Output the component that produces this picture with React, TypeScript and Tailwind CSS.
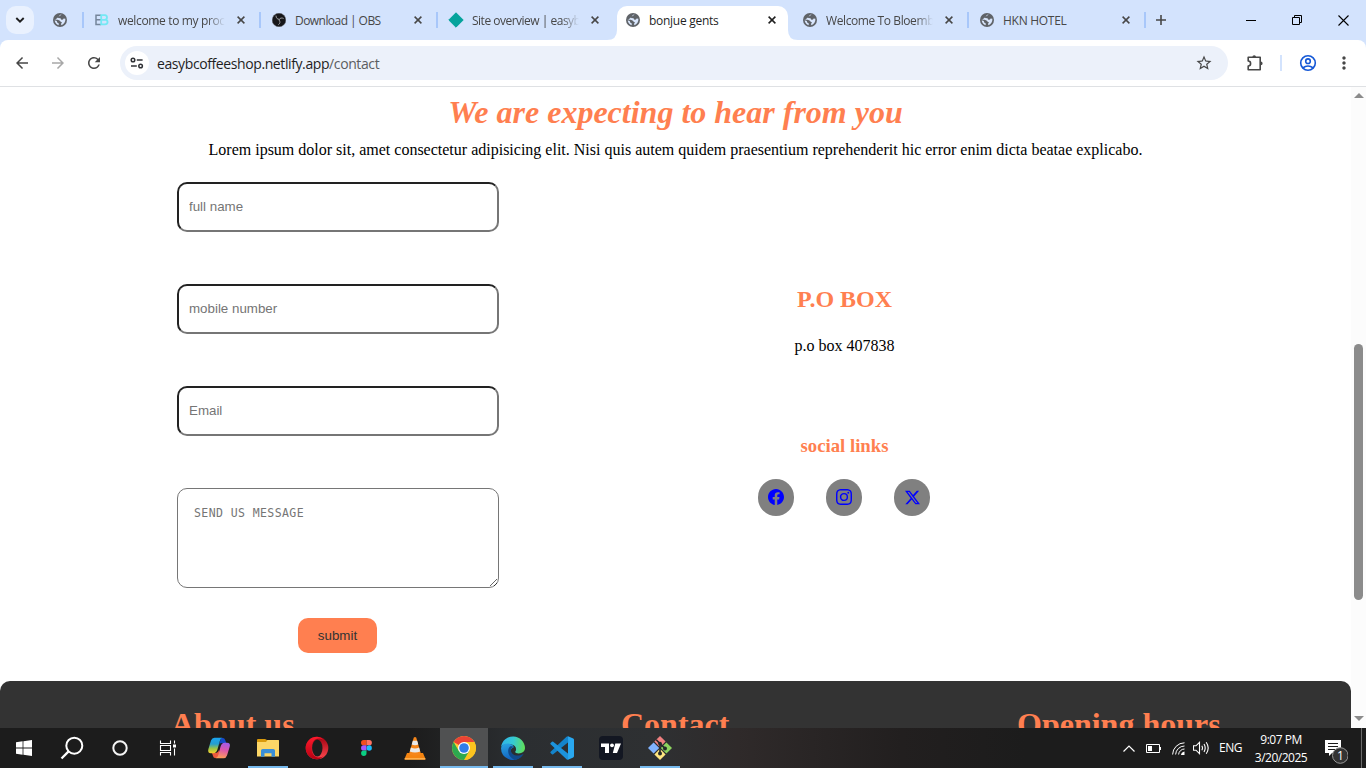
import type { ReactNode } from "react";
import { MdArrowBack, MdArrowForward, MdRefresh, MdStarBorder, MdMoreVert } from "react-icons/md";
import { BsFacebook, BsInstagram, BsTwitterX } from "react-icons/bs";

const Globe = () => (
  <svg width="14" height="14" viewBox="0 0 14 14" className="shrink-0">
    <circle cx="7" cy="7" r="7" fill="#5f6368" />
    <path d="M8.6 1.6 C7 1.4 6 2.6 6.4 3.4 C5.2 3.4 4.8 4.2 5 5 L7.6 5.2 C7.8 6.6 8.8 6.8 10 6.6 L10.6 5.4 L12.4 5.8 C12.6 9 11 11.4 8.4 12.2 L8 10.8 L9 9.4 L7.4 8.6 C6.8 7.2 5.2 6.6 1.6 6.8 C1.8 9.6 3.4 11.6 5.6 12.2 L5.8 10.6 L4.2 9.4 L3.8 8 L1.5 7.2 Z" fill="#d9e6fc" fillRule="evenodd" />
  </svg>
);

const ObsIcon = () => (
  <svg width="14" height="14" viewBox="0 0 14 14" className="shrink-0">
    <circle cx="7" cy="7" r="6.8" fill="#17171a" stroke="#55565c" strokeWidth=".5" />
    <g fill="none" stroke="#b9babd" strokeWidth=".8" strokeLinecap="round">
      <path d="M4 3 C4 5 5.2 6.2 7 6.3" />
      <path d="M11.3 5.3 C9.5 4.5 8 5 7.2 6.5" />
      <path d="M6.6 11.6 C8.3 10.4 8.4 8.6 7.2 7.2" />
    </g>
  </svg>
);

const EbIcon = () => (
  <svg width="14" height="14" viewBox="0 0 14 14" className="shrink-0">
    <path d="M6 2.2H1V11.4H6M1 6.8H6" fill="none" stroke="#76869b" strokeWidth="1.5" />
    <path d="M6.2 2.2H10Q12 2.4 12 4.4Q12 6.4 10 6.7Q12.6 7 12.6 9.2Q12.4 11.3 10 11.4H6.2ZM6.2 6.8H10" fill="none" stroke="#74e8f4" strokeWidth="1.8" />
  </svg>
);

const DiamondIcon = () => (
  <svg width="16" height="16" viewBox="0 0 16 16" className="-mx-px shrink-0">
    <path d="M8 .8L15.2 8L8 15.2L.8 8Z" fill="#05a39c" stroke="#05a39c" strokeLinejoin="round" />
  </svg>
);

const CloseIcon = ({ color = "#474747" }: { color?: string }) => (
  <svg width="8" height="8" viewBox="0 0 8 8" className="shrink-0">
    <path d="M.6 .6L7.4 7.4M7.4 .6L.6 7.4" stroke={color} strokeWidth="1.5" />
  </svg>
);

interface TabProps {
  title: string;
  icon: ReactNode;
  tracking?: string;
  active?: boolean;
  fade?: boolean;
  divider?: boolean;
}

const Tab = ({ title, icon, tracking = "tracking-[-0.28px]", active, fade, divider }: TabProps) => (
  <div className="relative flex h-10 w-[177px] shrink-0 items-center pl-[11px]">
    {active && (
      <>
        <div className="absolute top-1.5 left-0.5 h-[34px] w-[171px] rounded-t-[10px] bg-white" />
        <svg className="absolute bottom-0 left-[-8px]" width="10" height="10">
          <path d="M0 10Q10 10 10 0V10Z" fill="#fff" />
        </svg>
        <svg className="absolute bottom-0 left-[173px]" width="10" height="10">
          <path d="M10 10Q0 10 0 0V10Z" fill="#fff" />
        </svg>
      </>
    )}
    <div className="relative flex items-center">{icon}</div>
    <div
      className={
        "relative ml-[9px] w-[107px] overflow-hidden pt-0.5 text-[12px] leading-4 whitespace-nowrap " +
        tracking +
        (active ? " text-[#1f1f1f] " : " text-[#474747] ") +
        (fade ? "[mask-image:linear-gradient(to_right,black_84%,transparent)]" : "")
      }
    >
      {title}
    </div>
    <div className="relative ml-3">
      <CloseIcon color={active ? "#1f1f1f" : "#474747"} />
    </div>
    {divider && <div className="ml-auto h-4 w-0.5 bg-[#a8c7fa]" />}
  </div>
);

const TabStrip = () => (
  <div className="flex h-10 items-center bg-[#d3e3fd]">
    <button className="ml-1.5 flex size-7 shrink-0 items-center justify-center rounded-[10px] bg-[#e9f1fe]">
      <svg width="10" height="6" viewBox="0 0 10 6">
        <path d="M1.3 1L5 4.6L8.7 1" fill="none" stroke="#1f1f1f" strokeWidth="1.9" />
      </svg>
    </button>
    <div className="ml-[19px] flex w-[31px] shrink-0 items-center justify-between">
      <Globe />
      <div className="h-4 w-0.5 bg-[#a8c7fa]" />
    </div>
    <Tab title="welcome to my proc" icon={<EbIcon />} tracking="tracking-[-0.35px]" fade divider />
    <Tab title="Download | OBS" icon={<ObsIcon />} tracking="tracking-[-0.55px]" divider />
    <Tab title="Site overview | easyb" icon={<DiamondIcon />} tracking="tracking-[-0.5px]" fade />
    <Tab title="bonjue gents" icon={<Globe />} active />
    <Tab title="Welcome To Bloemb" icon={<Globe />} tracking="tracking-[-0.4px]" fade divider />
    <Tab title="HKN HOTEL" icon={<Globe />} divider />
    <svg width="10" height="10" viewBox="0 0 10 10" className="ml-[10px] shrink-0">
      <path d="M5 0V10M0 5H10" stroke="#474747" strokeWidth="1.6" />
    </svg>
    <div className="ml-auto flex items-center text-black">
      <div className="flex w-[46px] justify-center">
        <svg width="10" height="10"><path d="M0 5.5H10" stroke="currentColor" /></svg>
      </div>
      <div className="flex w-[46px] justify-center">
        <svg width="10" height="10" fill="none" stroke="currentColor">
          <path d="M.5 2.5H7.5V9.5H.5ZM2.5 2.5V.5H9.5V7.5H7.5" />
        </svg>
      </div>
      <div className="flex w-[46px] justify-center">
        <svg width="11" height="11"><path d="M.5 .5L10.5 10.5M10.5 .5L.5 10.5" stroke="currentColor" strokeWidth="1.1" /></svg>
      </div>
    </div>
  </div>
);

const Toolbar = () => (
  <div className="bg-[#d3e3fd]">
    <div className="flex h-[47px] items-center rounded-t-lg border-b border-[#dfe1e4] bg-white text-[#474747]">
      <MdArrowBack size={18} className="ml-[13px]" />
      <MdArrowForward size={18} className="ml-[18px] text-[#a8a8a8]" />
      <MdRefresh size={18} className="ml-[18px]" />
      <div className="ml-[17px] flex h-[34px] w-[1108px] items-center rounded-full bg-[#ecf1fa] pr-[15px] pl-[5px]">
        <div className="flex size-6 items-center justify-center rounded-full bg-white">
          <svg width="14" height="12" viewBox="0 0 14 12" fill="none" stroke="#303236" strokeWidth="1.5">
            <circle cx="3" cy="3" r="1.8" />
            <path d="M6.8 3H12.6" />
            <circle cx="10.6" cy="9" r="1.8" />
            <path d="M1 9H6.8" />
          </svg>
        </div>
        <div className="ml-2 pt-px text-[14px] leading-5 tracking-[-0.4px] whitespace-nowrap text-[#1f1f1f]">
          easybcoffeeshop.netlify.app<span className="text-[#5b5d61]">/contact</span>
        </div>
        <MdStarBorder size={18} className="ml-auto" />
      </div>
      <svg width="18" height="18" viewBox="0 0 18 18" className="ml-[18px]" fill="none">
        <path d="M2.2 3.3H14.2V15.7H2.2V12Q4.6 12 4.6 9.5Q4.6 7 2.2 7Z" stroke="currentColor" strokeWidth="1.6" strokeLinejoin="round" />
        <path d="M6.4 3A1.8 1.8 0 0 1 10 3ZM14.8 7.6A1.8 1.8 0 0 1 14.8 11.2Z" fill="currentColor" />
      </svg>
      <div className="ml-4 h-4 w-0.5 bg-[#d3e3fd]" />
      <svg width="18" height="18" viewBox="0 0 18 18" className="ml-[17px]" fill="none" stroke="#1558d6" strokeWidth="1.6">
        <circle cx="9" cy="9" r="7.3" />
        <circle cx="9" cy="7.2" r="2.3" />
        <path d="M3.7 14Q9 9.9 14.3 14" />
      </svg>
      <MdMoreVert size={20} className="ml-[17px]" />
    </div>
  </div>
);

const field =
  "block h-[50px] w-[322px] rounded-[10px] border-2 border-t-[#222] border-r-[#767676] border-b-[#767676] border-l-[#222] bg-white px-2.5 pb-0.5 font-['Liberation_Sans',sans-serif] text-[13.333px] placeholder:text-[#757575]";

const Social = ({ children }: { children: ReactNode }) => (
  <a className="flex h-[37px] w-9 items-center justify-center rounded-full bg-[#808080] pb-px text-[#00f]">{children}</a>
);

const Page = () => (
  <main className="flex h-[641px] w-[1351px] flex-col overflow-hidden bg-white font-['Liberation_Serif',serif] text-black">
    <h1 className="mt-[7px] text-center text-[32px] leading-[37px] font-bold text-[#ff7f50] italic">We are expecting to hear from you</h1>
    <p className="mt-[10px] text-center text-[16px] leading-[18px]">
      Lorem ipsum dolor sit, amet consectetur adipisicing elit. Nisi quis autem quidem praesentium reprehenderit hic error enim dicta beatae explicabo.
    </p>
    <div className="mt-[23px] flex h-[499px] shrink-0">
      <form className="ml-[177px] flex w-[322px] flex-col items-start">
        <input className={field} placeholder="full name" />
        <input className={field + " mt-[52px]"} placeholder="mobile number" />
        <input className={field + " mt-[52px]"} placeholder="Email" />
        <textarea
          className="mt-[52px] block h-[100px] w-[322px] resize rounded-[10px] border border-[#767676] bg-white px-4 pt-[17px] font-['DejaVu_Sans_Mono',monospace] text-[11.5px] leading-[15px] tracking-[0.41px] placeholder:text-[#757575]"
          placeholder="SEND US MESSAGE"
        />
        <button
          type="button"
          className="mt-[30px] ml-[121px] h-[35px] w-[79px] rounded-[10px] bg-[#ff7f50] font-['Liberation_Sans',sans-serif] text-[13.333px] text-[#333]"
        >
          submit
        </button>
      </form>
      <section className="ml-[169px] flex w-[352px] flex-col items-center pt-[103px]">
        <h2 className="pl-px text-[24px] leading-7 font-bold text-[#ff7f50]">P.O BOX</h2>
        <p className="mt-6 pl-px text-[16px] leading-[18px]">p.o box 407838</p>
        <h3 className="mt-20 pl-px text-[18.72px] leading-[21px] font-bold text-[#ff7f50]">social links</h3>
        <div className="mt-[23px] flex gap-8">
          <Social><BsFacebook size={16} /></Social>
          <Social><BsInstagram size={16} /></Social>
          <Social><BsTwitterX size={15} /></Social>
        </div>
      </section>
    </div>
    <footer className="flex h-[160px] shrink-0 rounded-[10px] bg-[#333] pt-[25px] text-[32px] leading-[37px] font-bold text-[#ff7f50]">
      <h2 className="ml-[171px] w-[450px]">About us</h2>
      <h2 className="w-[396px]">Contact</h2>
      <h2>Opening hours</h2>
    </footer>
  </main>
);

const Scrollbar = () => (
  <div className="flex w-[15px] flex-col items-center bg-[#fcfcfc]">
    <svg width="10" height="5" className="mt-[6px]"><path d="M5 0L10 5H0Z" fill="#8b8b8b" /></svg>
    <div className="mt-[246px] h-[256px] w-[9px] rounded-full bg-[#8b8b8b]" />
    <svg width="10" height="5" className="mt-auto mb-[7px]"><path d="M5 5L10 0H0Z" fill="#8b8b8b" /></svg>
  </div>
);

const WindowsIcon = () => (
  <svg width="16" height="16" viewBox="0 0 16 16" fill="#fff">
    <path d="M0 2.2L6.6 1.3V7.6H0ZM7.4 1.2L16 0V7.6H7.4ZM0 8.4H6.6V14.7L0 13.8ZM7.4 8.4H16V16L7.4 14.8Z" />
  </svg>
);

const SearchIcon = () => (
  <svg width="24" height="24" viewBox="0 0 24 24" fill="none" stroke="#fff" strokeWidth="2">
    <circle cx="14.3" cy="9.7" r="8" />
    <path d="M8.6 15.4L1.5 22.5" strokeWidth="2.3" />
  </svg>
);

const CortanaIcon = () => (
  <svg width="16" height="16"><circle cx="8" cy="8" r="6.7" fill="none" stroke="#f5f5f5" strokeWidth="2" /></svg>
);

const TaskViewIcon = () => (
  <svg width="18" height="16" viewBox="0 0 18 16" fill="none" stroke="#fff" strokeWidth="1.1">
    <path d="M1.5 .5V3.5H11.5V.5M1.5 15.5V12.5H11.5V15.5M1.5 5.5H11.5V10.5H1.5ZM15.5 .5V3.5M15.5 8.5V15.5" />
    <path d="M14 4.5H17V7.5H14Z" fill="#fff" stroke="none" />
  </svg>
);

const CopilotIcon = () => (
  <svg width="24" height="22" viewBox="0 0 24 22">
    <defs>
      <linearGradient id="cpA" x1="0" y1="0" x2="0" y2="1">
        <stop offset="0" stopColor="#1aa5f0" /><stop offset=".4" stopColor="#249ed0" /><stop offset=".7" stopColor="#9cc544" /><stop offset="1" stopColor="#f9d22e" />
      </linearGradient>
      <linearGradient id="cpB" x1=".6" y1="0" x2=".4" y2="1">
        <stop offset="0" stopColor="#a35be8" /><stop offset=".45" stopColor="#dc56ad" /><stop offset="1" stopColor="#ff9e58" />
      </linearGradient>
    </defs>
    <path d="M14 1H16Q17.5 1 18.2 3L19.3 6H15Q12.5 6 12 8Z" fill="#1449c8" />
    <path d="M8 21Q6.5 21 6 19L5 16H9Q11.2 16 12 13L14 18Q13 21 10 21Z" fill="#ed5a3c" />
    <path d="M7.5 .8H15.5Q13.6 1 12.9 3.8L10.6 12Q9.5 16.2 6.2 16.2H4Q.3 16.2 1.4 12L4 3.6Q5 .8 7.5 .8Z" fill="url(#cpA)" />
    <path d="M16.5 21.2H8.5Q10.6 21 11.3 18L13.5 9.8Q14.6 5.8 17.6 5.8H20Q23.8 5.8 22.7 9.8L20 18.4Q19 21.2 16.5 21.2Z" fill="url(#cpB)" />
  </svg>
);

const FolderIcon = () => (
  <svg width="22" height="18" viewBox="0 0 22 18">
    <path d="M0 1Q0 0 1 0H8L10 1H21Q22 1 22 2V17H0Z" fill="#d99a0c" />
    <path d="M0 3H9L10.5 1H21.3Q22 1 22 2V17.5H0Z" fill="#fcd667" />
    <path d="M4 17.8V11.5Q4 9.9 5.7 9.9H16.3Q18 9.9 18 11.5V17.8H14.5V14.2H7.5V17.8Z" fill="#3a8fd8" />
  </svg>
);

const OperaIcon = () => (
  <svg width="24" height="24" viewBox="0 0 24 24">
    <defs>
      <linearGradient id="opA" x1="0" y1="0" x2="0" y2="1"><stop stopColor="#ff1b2d" /><stop offset="1" stopColor="#b60012" /></linearGradient>
      <linearGradient id="opB" x1="0" y1="0" x2="0" y2="1"><stop stopColor="#a10010" /><stop offset="1" stopColor="#ff4a50" /></linearGradient>
    </defs>
    <circle cx="12" cy="12" r="11.3" fill="url(#opB)" />
    <path d="M12 .7A11.3 11.3 0 0 0 12 23.3Q15.5 23.2 18.8 20.2C10 24 6.7 18 6.7 12S10 0 18.8 3.8Q15.5 .8 12 .7Z" fill="url(#opA)" />
    <ellipse cx="12.3" cy="12" rx="5.2" ry="8.6" fill="#1d1d1d" />
  </svg>
);

const FigmaIcon = () => (
  <svg width="11" height="16" viewBox="0 0 11 16">
    <path d="M5.5 0V5.3H2.7A2.65 2.65 0 0 1 2.7 0Z" fill="#f24e1e" />
    <path d="M5.5 0H8.2A2.65 2.65 0 0 1 8.2 5.3H5.5Z" fill="#ff7262" />
    <path d="M5.5 5.3V10.6H2.7A2.65 2.65 0 0 1 2.7 5.3Z" fill="#a259ff" />
    <circle cx="8.2" cy="8" r="2.65" fill="#1abcfe" />
    <path d="M2.7 10.6H5.5V13.3A2.7 2.7 0 1 1 2.7 10.6Z" fill="#0acf83" />
  </svg>
);

const VlcIcon = () => (
  <svg width="22" height="24" viewBox="0 0 22 24">
    <path d="M3 17H19L21.5 23Q21.5 23.5 20.5 23.5H1.5Q.5 23.5 .5 23Z" fill="#f58410" />
    <path d="M.7 22H21.3V23.7H.7Z" fill="#ffae4a" />
    <path d="M9.8 1.5Q11 .6 12.2 1.5L17 18Q11 21.5 5 18Z" fill="#f6861a" />
    <path d="M8.8 4.8H13.2L14.3 8.6Q11 10 7.7 8.6Z" fill="#e9e9e9" />
    <path d="M6.9 11.6Q11 13.3 15.1 11.6L16.2 15.4Q11 17.6 5.8 15.4Z" fill="#e9e9e9" />
  </svg>
);

const ChromeIcon = () => (
  <svg width="24" height="24" viewBox="0 0 24 24">
    <circle cx="12" cy="12" r="12" fill="#fcc934" />
    <path d="M12 12L1.61 6A12 12 0 0 1 22.39 6H12Z" fill="#ea4335" />
    <path d="M12 6H22.39A12 12 0 0 1 12 24L17.2 15Z" fill="#fcc31e" />
    <path d="M1.61 6A12 12 0 0 0 12 24L17.2 15L12 12L6.8 15Z" fill="#2da94f" />
    <circle cx="12" cy="12" r="6" fill="#fff" />
    <circle cx="12" cy="12" r="4.8" fill="#2f7de9" />
  </svg>
);

const EdgeIcon = () => (
  <svg width="24" height="24" viewBox="0 0 24 24">
    <defs>
      <linearGradient id="edA" x1="0" y1=".3" x2="1" y2=".4"><stop stopColor="#2fb3ea" /><stop offset=".5" stopColor="#35c9d4" /><stop offset="1" stopColor="#5fe05a" /></linearGradient>
      <linearGradient id="edB" x1="0" y1="0" x2=".3" y2="1"><stop stopColor="#2aa6e4" /><stop offset="1" stopColor="#1263c0" /></linearGradient>
    </defs>
    <path d="M.1 11A12 12 0 0 1 24 12C24 15.5 21 17.4 17.8 17.4C15.2 17.4 13.8 16.4 14.3 15.6C16.2 13 14.7 8.8 9.8 8.2C5.3 7.7 1.2 9 .1 11Z" fill="url(#edA)" />
    <path d="M0 12C1 7.8 6 6.6 9.8 8.2C12 9 12.8 10.4 12.5 11.5C9 12.3 8.5 17 13 20.5C15 22 18 21.8 20.3 20.6A12 12 0 0 1 0 12Z" fill="url(#edB)" />
    <path d="M9 10.5C5.5 13.8 7 20.8 13.5 23.9C17 23.7 20.5 21.6 22.3 18.6C22.5 18.2 22.1 18 21.8 18.2C15.5 21.5 9.4 18 9.9 13.7C10.1 12.2 11 11.4 12.5 11.3C12 10.3 10.3 9.9 9 10.5Z" fill="#114a8b" />
  </svg>
);

const VsCodeIcon = () => (
  <svg width="24" height="24" viewBox="0 0 24 24">
    <path d="M18 .2L23.2 2.6Q24 3 24 4V20Q24 21 23.2 21.4L18 23.8Z" fill="#29a8f0" />
    <path d="M18 .2L18.2 6.3L3.2 18.3Q2.6 18.7 2 18.3L.6 17Q0 16.4 .6 15.7L16.5 .8Q17.2 .1 18 .2Z" fill="#1484cb" />
    <path d="M18 23.8L18.2 17.7L3.2 5.7Q2.6 5.3 2 5.7L.6 7Q0 7.6 .6 8.3L16.5 23.2Q17.2 23.9 18 23.8Z" fill="#1c93dc" />
  </svg>
);

const TradingViewIcon = () => (
  <svg width="24" height="24" viewBox="0 0 24 24">
    <rect width="24" height="24" rx="4" fill="#131722" />
    <path d="M2 7.5H10V17H6V11H2ZM16.3 7.5H22L18 17H13.8Z" fill="#fff" />
    <circle cx="13" cy="9.3" r="1.9" fill="#fff" />
  </svg>
);

const GitIcon = () => (
  <svg width="24" height="24" viewBox="0 0 24 24">
    <path d="M12 0L17.6 5.6L12 11.2L6.4 5.6Z" fill="#f08080" />
    <path d="M5.6 6.4L11.2 12L5.6 17.6L0 12Z" fill="#80b3ff" />
    <path d="M18.4 6.4L24 12L18.4 17.6L12.8 12Z" fill="#8dd35f" />
    <path d="M12 12.8L17.6 18.4L12 24L6.4 18.4Z" fill="#ffe680" />
    <path d="M8.2 3.8L12 7.6V18M12 7.6L17 12.4" stroke="#24282a" strokeWidth="1.6" fill="none" />
    <g fill="#24282a"><circle cx="12" cy="7.6" r="1.9" /><circle cx="17" cy="12.4" r="2" /><circle cx="12" cy="17.6" r="2" /></g>
  </svg>
);

interface AppItem { icon: ReactNode; open?: boolean; current?: boolean }

const apps: AppItem[] = [
  { icon: <CopilotIcon /> },
  { icon: <FolderIcon />, open: true },
  { icon: <OperaIcon /> },
  { icon: <FigmaIcon /> },
  { icon: <VlcIcon /> },
  { icon: <ChromeIcon />, current: true },
  { icon: <EdgeIcon />, open: true },
  { icon: <VsCodeIcon />, open: true },
  { icon: <TradingViewIcon /> },
  { icon: <GitIcon />, open: true },
];

const Taskbar = () => (
  <div className="flex h-10 items-center bg-[linear-gradient(to_right,#1c1c1c_30%,#2b2e31_38%,#2e3032_48%,#2f2a2a_54%,#221f1f_66%,#1c1c1c_75%)] text-white">
    {[<WindowsIcon />, <SearchIcon />, <CortanaIcon />, <TaskViewIcon />].map((icon, i) => (
      <div key={i} className="flex h-10 w-12 items-center justify-center">{icon}</div>
    ))}
    <div className="ml-[3px] flex gap-px">
      {apps.map(({ icon, open, current }, i) => (
        <div key={i} className={"relative flex h-10 w-12 items-center justify-center " + (current ? "bg-[#505152]" : "")}>
          {icon}
          {(open || current) && (
            <div className={"absolute bottom-0 h-0.5 bg-[#76b9ed] " + (current ? "w-12" : "w-10")} />
          )}
        </div>
      ))}
    </div>
    <svg width="12" height="7" viewBox="0 0 12 7" className="ml-auto"><path d="M.5 6.5L6 1L11.5 6.5" fill="none" stroke="#fff" strokeWidth="1.2" /></svg>
    <svg width="15" height="9" viewBox="0 0 15 9" className="ml-[11px]">
      <path d="M.5 .5H13.5V8.5H.5Z" fill="none" stroke="#fff" /><path d="M2 2H6V7H2ZM14 3H15V6H14Z" fill="#fff" />
    </svg>
    <svg width="13" height="13" viewBox="0 0 13 13" className="ml-[11px]" fill="none" stroke="#fff" strokeWidth="1">
      <path d="M.6 12.5A12 12 0 0 1 12.5 .8M3.6 12.5A9 9 0 0 1 12.5 4M6.6 12.5A6 6 0 0 1 12.5 7" />
      <path d="M9 13Q9.3 10.2 12.5 9.6V13Z" fill="#fff" stroke="none" />
    </svg>
    <svg width="17" height="14" viewBox="0 0 17 14" className="ml-2" fill="none" stroke="#fff" strokeWidth="1.1">
      <path d="M.5 4.8H3L6.5 1.4V12.6L3 9.2H.5ZM8.8 4.8Q10.2 7 8.8 9.2M11 3Q13.4 7 11 11M13.2 1.2Q17.2 7 13.2 12.8" />
    </svg>
    <div className="ml-[9px] w-[24px] text-[12px] tracking-[-0.5px]">ENG</div>
    <div className="ml-2 w-[60px] pt-px text-center text-[12px] leading-[18px] tracking-[-0.5px]">
      <div>9:07 PM</div>
      <div>3/20/2025</div>
    </div>
    <div className="relative ml-[13px] h-10 w-6">
      <svg width="24" height="28" viewBox="0 0 24 28" className="mt-[11px]">
        <path d="M1 1H17V14H8L5 17V14H1Z" fill="#fff" />
        <path d="M4 4.5H14M4 7.5H14M4 10.5H11" stroke="#1c1c1c" />
        <circle cx="16.3" cy="16.5" r="7.8" fill="#333" stroke="#999" />
      </svg>
      <span className="absolute top-[20px] left-[9px] w-[15px] text-center text-[12px] leading-[15px]">1</span>
    </div>
    <div className="mr-1 ml-[13px] h-10 w-px bg-[#6a6a6a]" />
  </div>
);

export default function App() {
  return (
    <div className="flex h-[768px] w-[1366px] flex-col overflow-hidden bg-white font-['Open_Sans','Noto_Sans',sans-serif]">
      <TabStrip />
      <Toolbar />
      <div className="flex h-[641px]">
        <Page />
        <Scrollbar />
      </div>
      <Taskbar />
    </div>
  );
}
